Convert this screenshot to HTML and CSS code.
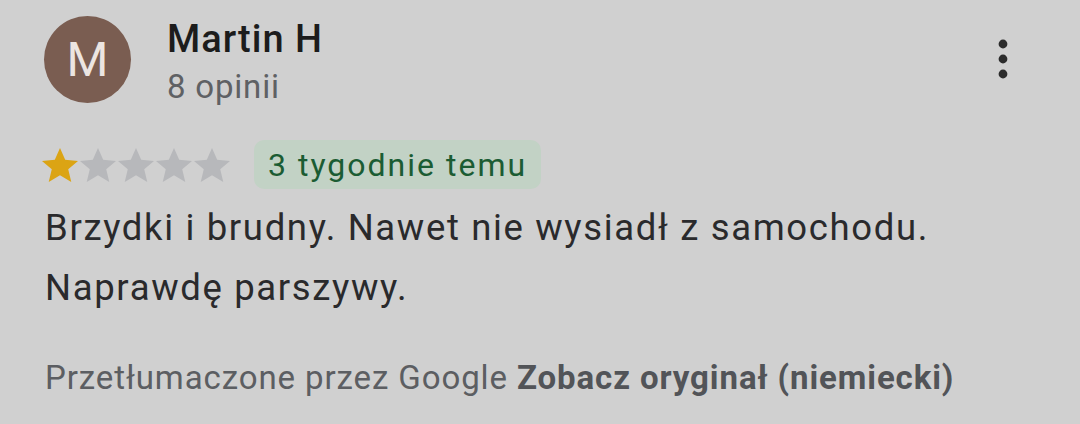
FILE: index.html
```html
<!DOCTYPE html>
<html lang="pl">
<head>
<meta charset="utf-8">
<link rel="stylesheet" href="styles.css">
</head>
<body>
<div class="review">
  <div class="header">
    <div class="avatar">M</div>
    <div class="who">
      <div class="name">Martin H</div>
      <div class="count">8 opinii</div>
    </div>
    <div class="more">
      <svg width="12" height="40" viewBox="0 0 12 40"><circle cx="6" cy="5" r="4.4" fill="#2b2b2b"/><circle cx="6" cy="20" r="4.4" fill="#2b2b2b"/><circle cx="6" cy="35" r="4.4" fill="#2b2b2b"/></svg>
    </div>
  </div>
  <div class="meta">
    <div class="stars">
      <svg class="star" viewBox="2 2.2 20 19"><path fill="#dba414" d="M12 2.2l2.9 6.6 7.2.6-5.5 4.7 1.7 7.1L12 17.4l-6.3 3.8 1.7-7.1-5.5-4.7 7.2-.6z"/></svg>
      <svg class="star" viewBox="2 2.2 20 19"><path fill="#b7b8bb" d="M12 2.2l2.9 6.6 7.2.6-5.5 4.7 1.7 7.1L12 17.4l-6.3 3.8 1.7-7.1-5.5-4.7 7.2-.6z"/></svg>
      <svg class="star" viewBox="2 2.2 20 19"><path fill="#b7b8bb" d="M12 2.2l2.9 6.6 7.2.6-5.5 4.7 1.7 7.1L12 17.4l-6.3 3.8 1.7-7.1-5.5-4.7 7.2-.6z"/></svg>
      <svg class="star" viewBox="2 2.2 20 19"><path fill="#b7b8bb" d="M12 2.2l2.9 6.6 7.2.6-5.5 4.7 1.7 7.1L12 17.4l-6.3 3.8 1.7-7.1-5.5-4.7 7.2-.6z"/></svg>
      <svg class="star" viewBox="2 2.2 20 19"><path fill="#b7b8bb" d="M12 2.2l2.9 6.6 7.2.6-5.5 4.7 1.7 7.1L12 17.4l-6.3 3.8 1.7-7.1-5.5-4.7 7.2-.6z"/></svg>
    </div>
    <div class="chip">3 tygodnie temu</div>
  </div>
  <p class="text">Brzydki i brudny. Nawet nie wysiadł z samochodu.<br>Naprawdę parszywy.</p>
  <p class="footer">Przetłumaczone przez Google <b>Zobacz oryginał (niemiecki)</b></p>
</div>
</body>
</html>
```
FILE: styles.css
```css
html, body {
  margin: 0;
  padding: 0;
  background: #d0d0d0;
  width: 1080px;
  height: 424px;
  overflow: hidden;
  font-family: Roboto, "Noto Sans", sans-serif;
}
.review {
  padding: 16px 0 0 44px;
}
.header {
  display: flex;
  align-items: flex-start;
}
.avatar {
  width: 87px;
  height: 87px;
  border-radius: 50%;
  background: #7a5d51;
  color: #ece5e1;
  font-size: 48px;
  display: flex;
  align-items: center;
  justify-content: center;
  flex: none;
}
.who {
  margin-left: 36px;
  padding-top: 1px;
  flex: 1;
}
.name {
  font-size: 38px;
  font-weight: 500;
  letter-spacing: 1px;
  color: #1c1c1c;
  line-height: 44px;
}
.count {
  margin-top: 4px;
  font-size: 33px;
  letter-spacing: 0.8px;
  color: #5f6164;
  line-height: 44px;
}
.more {
  width: 12px;
  margin-right: 71px;
  padding-top: 23px;
}
.more svg { display: block; }
.meta {
  display: flex;
  align-items: center;
  margin-top: 31px;
}
.stars {
  display: flex;
  gap: 2px;
  margin-left: -2px;
}
.star {
  width: 36px;
  height: 34px;
}
.chip {
  margin-left: 24px;
  height: 49px;
  padding: 0 14px 0 14px;
  border-radius: 10px;
  background: #c2d2c5;
  color: #1b5c33;
  font-size: 32px;
  letter-spacing: 2px;
  display: flex;
  align-items: center;
}
.text {
  margin: 9px 0 0 1px;
  font-size: 36.5px;
  letter-spacing: 1.65px;
  line-height: 59.5px;
  color: #2a2a2c;
}
.footer {
  margin: 41px 0 0 1px;
  font-size: 33px;
  letter-spacing: 0.9px;
  color: #5c5e62;
}
.footer b {
  font-weight: 700;
  color: #525458;
}
```
